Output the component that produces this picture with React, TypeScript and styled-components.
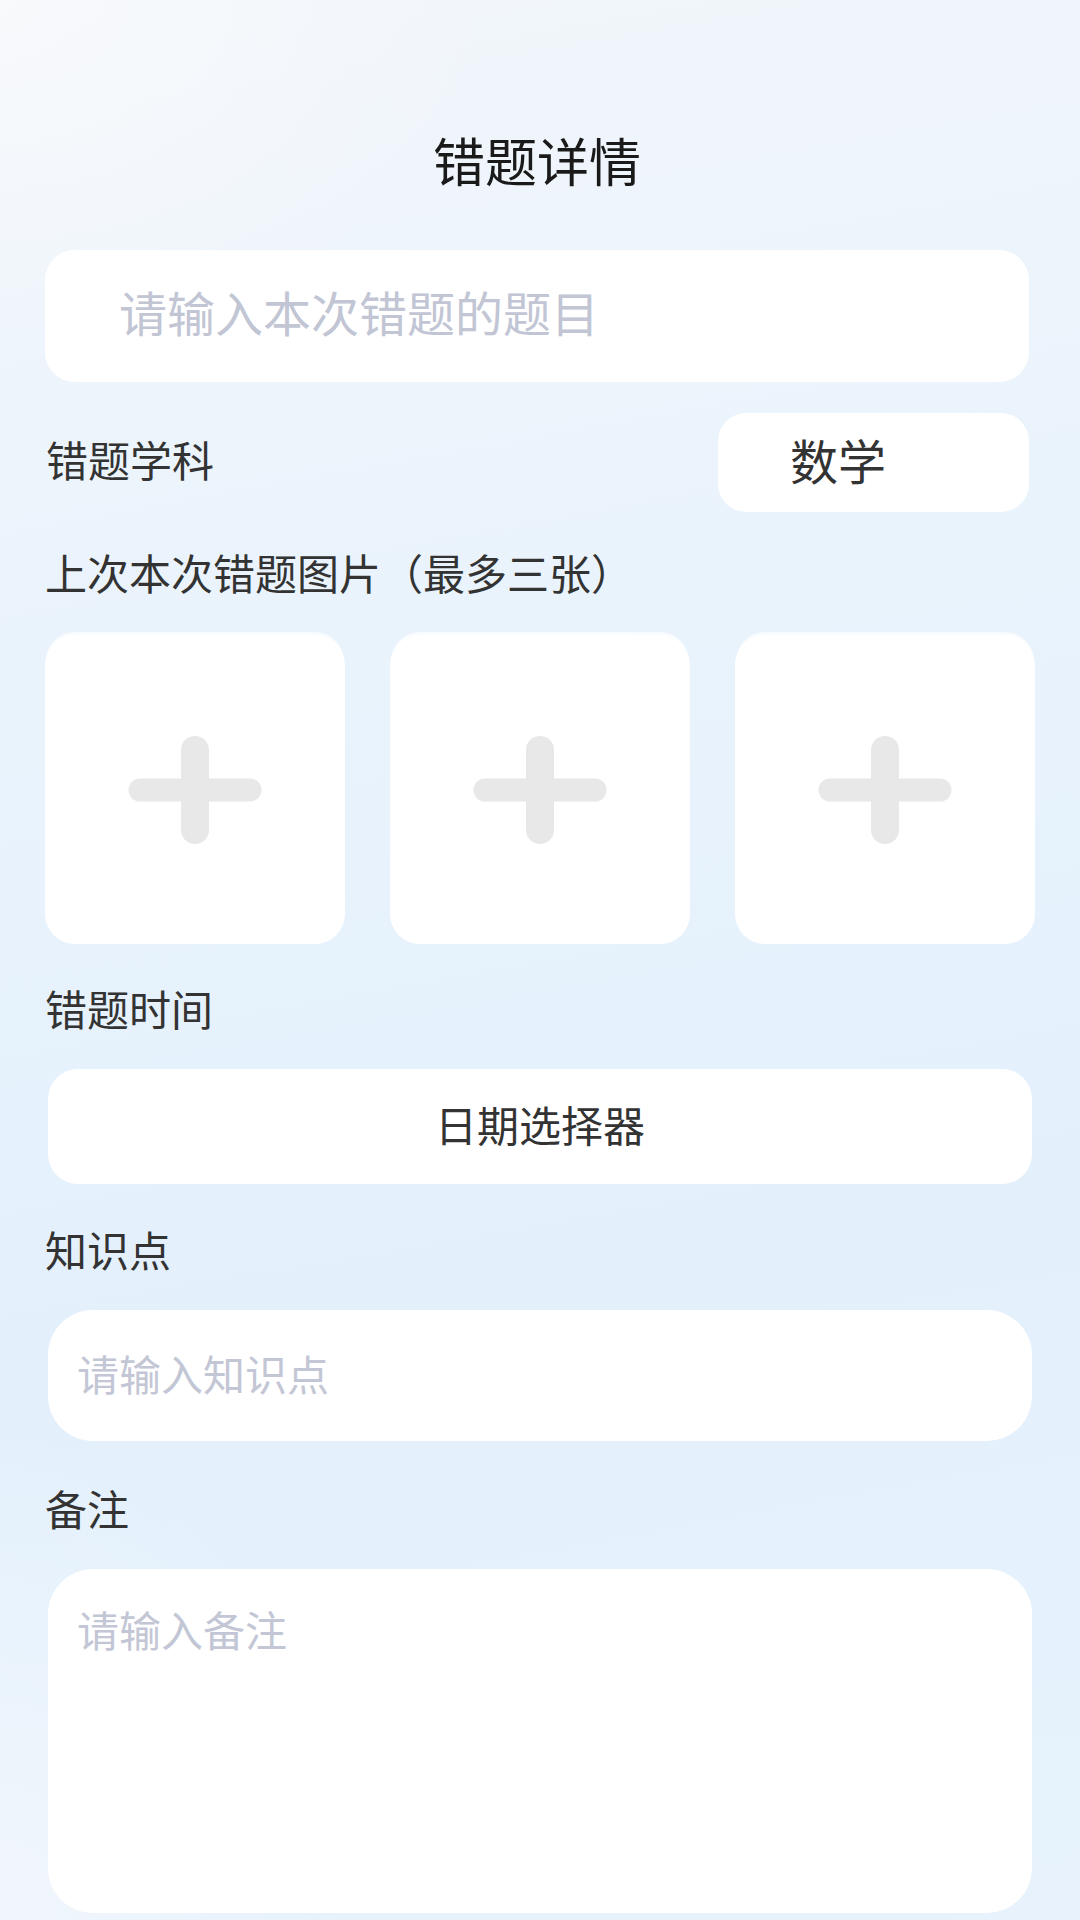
import React from "react";
import styled, { createGlobalStyle } from "styled-components";

const GlobalStyle = createGlobalStyle`
  html, body {
    margin: 0;
    padding: 0;
  }
  body {
    font-family: "Noto Sans CJK SC", "Noto Sans", sans-serif;
    background: #eaf3fc;
  }
  * { box-sizing: border-box; }
`;

const Page = styled.div`
  width: 1080px;
  height: 1920px;
  overflow: hidden;
  display: flex;
  flex-direction: column;
  padding: 127px 51px 0 45px;
  background:
    radial-gradient(ellipse 700px 500px at 0% 0%, rgba(248, 250, 252, 0.95), rgba(248, 250, 252, 0) 70%),
    radial-gradient(ellipse 500px 700px at 0% 100%, rgba(242, 247, 252, 0.9), rgba(242, 247, 252, 0) 70%),
    linear-gradient(170deg, #f2f6fb 0%, #e9f3fc 35%, #e3f0fc 65%, #e7f2fc 100%);
`;

const Title = styled.h1`
  margin: 0;
  text-align: center;
  font-size: 52px;
  line-height: 65px;
  padding-bottom: 8px;
  font-weight: 400;
  color: #1a1a1a;
`;

const TitleInput = styled.div`
  margin-top: 50px;
  height: 132px;
  border-radius: 30px;
  background: #ffffff;
  display: flex;
  align-items: center;
  padding: 0 0 10px 74px;
  font-size: 48px;
  color: #c1c5d4;
`;

const SubjectRow = styled.div`
  margin-top: 31px;
  display: flex;
  align-items: center;
  justify-content: space-between;
`;

const Label = styled.div<{ $gap: number }>`
  margin-top: ${(p) => p.$gap}px;
  font-size: 42px;
  line-height: 51px;
  padding-bottom: 8px;
  color: #333333;
`;

const RowLabel = styled.div`
  font-size: 42px;
  line-height: 51px;
  padding: 0 0 8px 1px;
  color: #333333;
`;

const SubjectBox = styled.div`
  width: 311px;
  height: 99px;
  border-radius: 28px;
  background: #ffffff;
  display: flex;
  align-items: center;
  padding: 0 0 8px 72px;
  font-size: 48px;
  color: #333333;
`;

const PhotoGrid = styled.div`
  margin-top: 30px;
  display: grid;
  grid-template-columns: repeat(3, 300px);
  column-gap: 45px;
`;

const PhotoSlot = styled.div`
  height: 309px;
  border-radius: 30px;
  background: #ffffff;
  display: flex;
  align-items: center;
  justify-content: center;
  box-shadow: 0 -4px 0 -1px rgba(255, 255, 255, 0.7);
`;

const Shifted = styled.div`
  margin-top: 28px;
  margin-left: 3px;
  margin-right: -3px;
`;

const DateBox = styled.div`
  height: 115px;
  border-radius: 30px;
  background: #ffffff;
  display: flex;
  align-items: center;
  justify-content: center;
  padding-bottom: 7px;
  font-size: 42px;
  color: #333333;
`;

const TextBox = styled.div<{ $tall?: boolean }>`
  height: ${(p) => (p.$tall ? 344 : 131)}px;
  border-radius: 45px;
  background: #ffffff;
  display: flex;
  align-items: ${(p) => (p.$tall ? "flex-start" : "center")};
  padding: ${(p) => (p.$tall ? "30px 0 0 29px" : "0 0 7px 29px")};
  font-size: 42px;
  line-height: 59px;
  color: #c3c6d5;
`;

const PlusIcon = () => (
  <svg width="134" height="108" viewBox="0 0 134 108">
    <line x1="12" y1="54" x2="122" y2="54" stroke="#e8e8e8" strokeWidth="23" strokeLinecap="round" />
    <line x1="67" y1="14" x2="67" y2="94" stroke="#e8e8e8" strokeWidth="28" strokeLinecap="round" />
  </svg>
);

export default function App() {
  return (
    <>
      <GlobalStyle />
      <Page>
        <Title>错题详情</Title>
        <TitleInput>请输入本次错题的题目</TitleInput>
        <SubjectRow>
          <RowLabel>错题学科</RowLabel>
          <SubjectBox>数学</SubjectBox>
        </SubjectRow>
        <Label $gap={34}>上次本次错题图片（最多三张）</Label>
        <PhotoGrid>
          {[0, 1, 2].map((i) => (
            <PhotoSlot key={i}>
              <PlusIcon />
            </PhotoSlot>
          ))}
        </PhotoGrid>
        <Label $gap={38}>错题时间</Label>
        <Shifted>
          <DateBox>日期选择器</DateBox>
        </Shifted>
        <Label $gap={39}>知识点</Label>
        <Shifted>
          <TextBox>请输入知识点</TextBox>
        </Shifted>
        <Label $gap={41}>备注</Label>
        <Shifted>
          <TextBox $tall>请输入备注</TextBox>
        </Shifted>
      </Page>
    </>
  );
}
